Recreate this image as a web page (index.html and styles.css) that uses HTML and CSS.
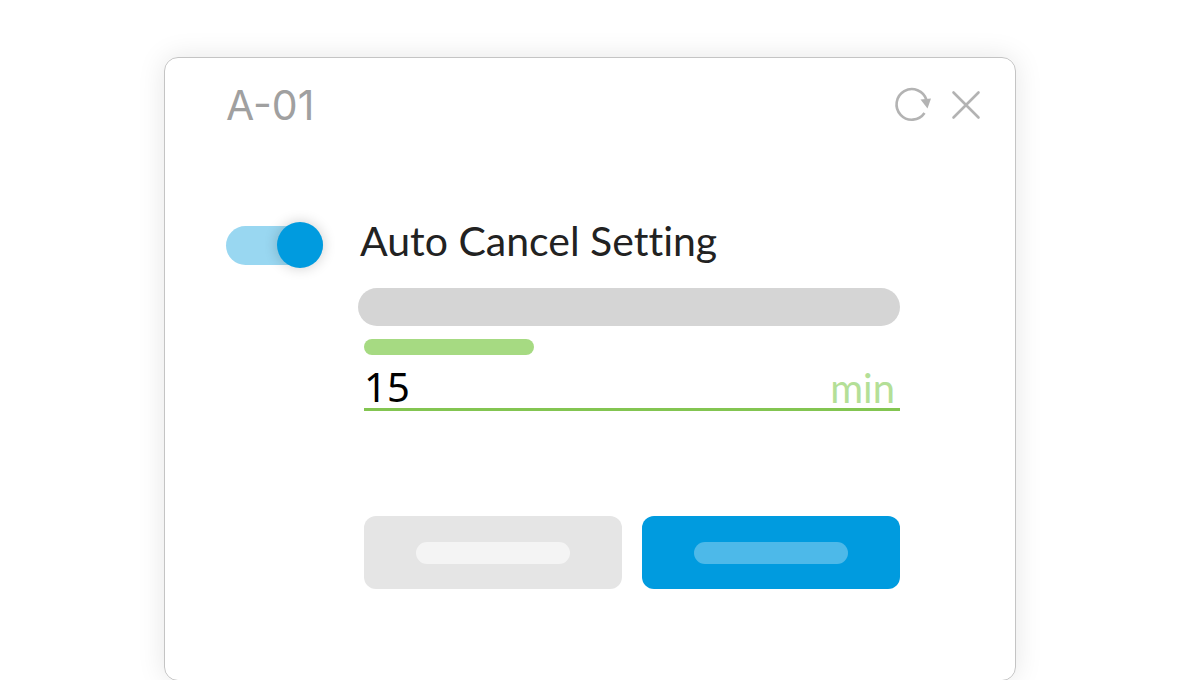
FILE: index.html
```html
<!DOCTYPE html>
<html lang="en">
<head>
    <meta charset="UTF-8">
    <meta name="viewport" content="width=device-width, initial-scale=1">
    <title>A-01</title>
    <link rel="stylesheet" href="styles.css">
</head>
<body>
<main class="dialog">
    <header class="dialog-head">
        <h1>A-01</h1>
        <div class="tools">
            <button type="button" class="icon-btn" aria-label="Refresh">
                <svg width="38" height="38" viewBox="0 0 38 38">
                    <path d="M33.5 14A15.3 15.3 0 1 0 31.5 27" fill="none" stroke="#b3b3b3" stroke-width="2.6"/>
                    <path d="M27.5 13.5L38 12.5L34.5 22.5Z" fill="#b3b3b3"/>
                </svg>
            </button>
            <button type="button" class="icon-btn" aria-label="Close">
                <svg width="30" height="38" viewBox="0 0 30 38">
                    <path d="M2.5 6.5L27.5 31.5M27.5 6.5L2.5 31.5" fill="none" stroke="#b3b3b3" stroke-width="2.6" stroke-linecap="round"/>
                </svg>
            </button>
        </div>
    </header>
    <form class="setting">
        <input type="checkbox" id="auto" class="switch" checked>
        <div class="content">
            <label for="auto" class="name">Auto Cancel Setting</label>
            <div class="desc"></div>
            <div class="fields">
                <div class="field-label"></div>
                <div class="field">
                    <input type="text" id="minutes" value="15" inputmode="numeric">
                    <label for="minutes">min</label>
                </div>
                <div class="actions">
                    <button type="button" class="btn" aria-label="Cancel"><span></span></button>
                    <button type="button" class="btn primary" aria-label="Save"><span></span></button>
                </div>
            </div>
        </div>
    </form>
</main>
</body>
</html>
```
FILE: styles.css
```css
*{
    box-sizing: border-box;
    margin: 0;
    padding: 0;
}
body{
    padding: 57px 184px 0 164px;
    background: #fff;
    font-family: Lato, "Liberation Sans", sans-serif;
    font-size: 40px;
    line-height: 44px;
    color: #222;
}
.dialog{
    padding: 23px 34px 91px 61px;
    border: 1px solid #c4c4c4;
    border-radius: 14px;
    box-shadow: 0 0 28px rgba(0, 0, 0, .1);
}
.dialog-head{
    display: flex;
    justify-content: space-between;
    align-items: center;
}
h1{
    font-family: Inter, sans-serif;
    font-size: 41px;
    font-weight: 400;
    line-height: 48px;
    color: #a0a0a0;
}
.tools{
    display: flex;
    gap: 20px;
}
.icon-btn{
    border: 0;
    background: none;
    cursor: pointer;
}
.icon-btn svg{
    display: block;
}
.setting{
    display: flex;
    gap: 35px;
    padding: 90px 81px 0 0;
}
/* switch */
.switch{
    appearance: none;
    flex: none;
    position: relative;
    width: 97px;
    height: 39px;
    margin-top: 7px;
    border-radius: 20px;
    background: #99d7f1;
    cursor: pointer;
}
.switch::before{
    content: "";
    position: absolute;
    top: -4px;
    left: 0;
    width: 46px;
    height: 46px;
    border-radius: 50%;
    background: #009bdf;
    box-shadow: 0 0 14px rgba(0, 0, 0, .2);
}
.switch:checked::before{
    left: auto;
    right: 0;
}
.content{
    flex: 1;
    min-width: 0;
}
.name{
    display: block;
    padding-left: 2px;
    font-size: 41px;
    font-variant-ligatures: none;
}
.desc{
    height: 38px;
    margin-top: 25px;
    border-radius: 19px;
    background: #d5d5d5;
}
.fields{
    padding: 13px 0 0 6px;
}
.field-label{
    width: 170px;
    height: 16px;
    border-radius: 8px;
    background: #a6da82;
}
.field{
    display: flex;
    padding: 9px 5px 0 0;
    border-bottom: 3px solid #83c551;
}
.field input{
    flex: 1;
    min-width: 0;
    height: 44px;
    border: 0;
    outline: 0;
    background: none;
    font-family: "Noto Sans", sans-serif;
    font-size: 40px;
    color: #000;
}
.field label{
    height: 44px;
    line-height: 48px;
    color: #b4df97;
}
.actions{
    display: flex;
    gap: 20px;
    margin-top: 105px;
}
.btn{
    display: flex;
    flex: 1;
    justify-content: center;
    align-items: center;
    height: 73px;
    border: 0;
    border-radius: 12px;
    background: #e5e5e5;
    cursor: pointer;
}
.btn span{
    width: 60%;
    height: 22px;
    border-radius: 11px;
    background: #f4f4f4;
}
.primary{
    background: #009bdf;
}
.primary span{
    background: #4db9e9;
}
```
